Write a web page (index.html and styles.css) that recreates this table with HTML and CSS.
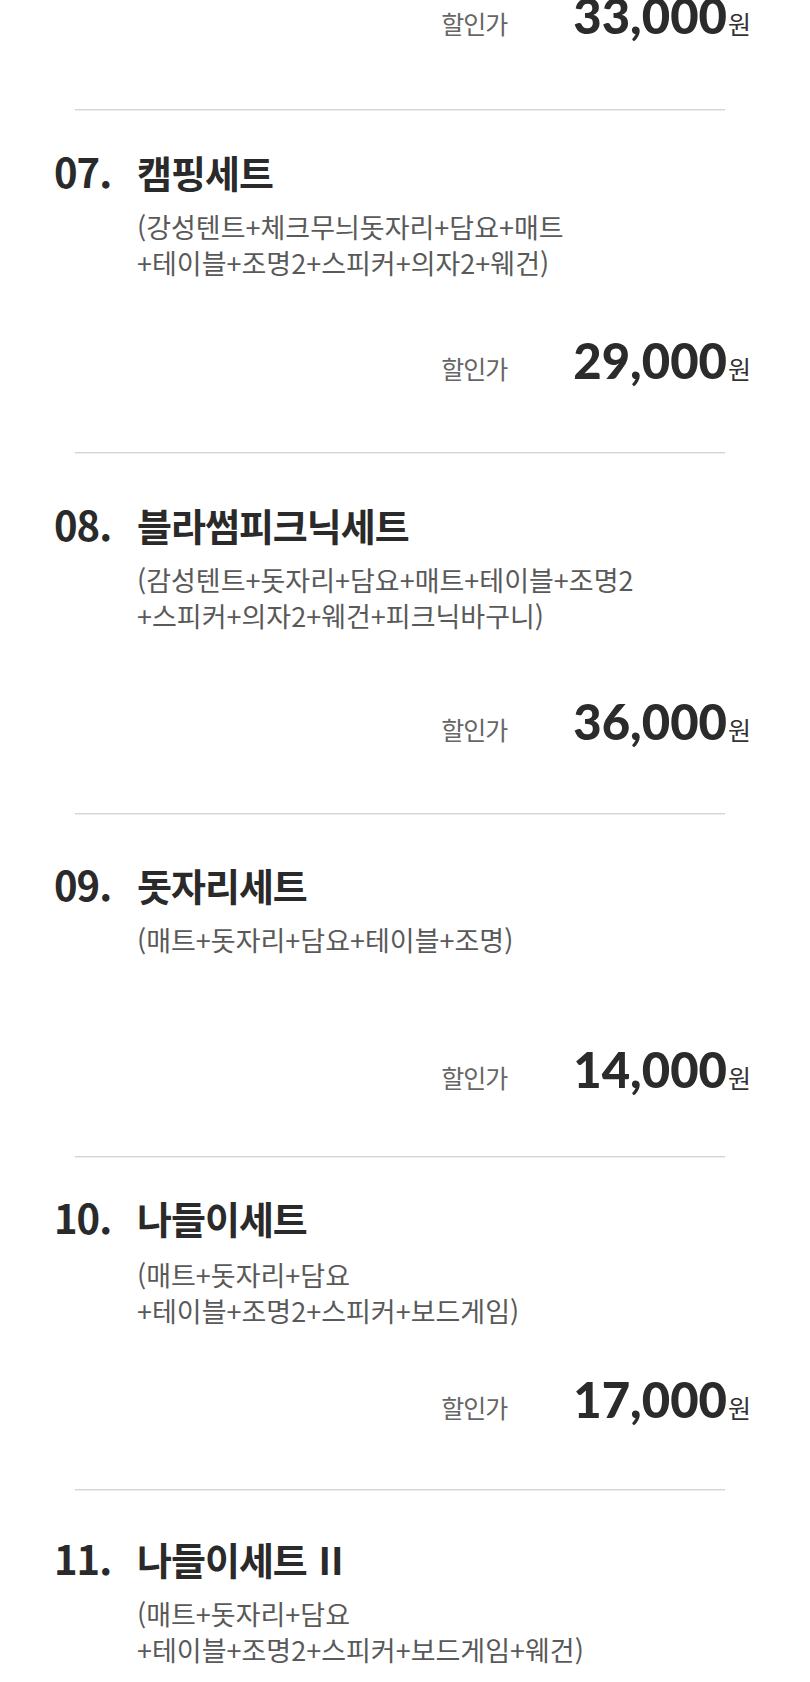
FILE: index.html
```html
<!DOCTYPE html>
<html lang="ko">
  <head>
    <meta charset="UTF-8" />
    <meta name="viewport" content="width=device-width, initial-scale=1.0" />
    <title>피크닉 세트 가격표</title>
    <link rel="stylesheet" href="styles.css">
  </head>
  <body>
    <div class="price-list">

      <!-- 06번 세트의 마지막 줄 (위에서 잘려 있음) -->
      <div class="item item--cut">
        <div class="price-row">
          <span class="price-label">할인가</span>
          <span class="price-value">33,000</span><span class="price-unit">원</span>
        </div>
      </div>

      <hr class="divider" />

      <div class="item item--07">
        <div class="item-head">
          <span class="item-no">07.</span>
          <h2 class="item-title">캠핑세트</h2>
        </div>
        <p class="item-desc">(강성텐트+체크무늬돗자리+담요+매트<br />+테이블+조명2+스피커+의자2+웨건)</p>
        <div class="price-row">
          <span class="price-label">할인가</span>
          <span class="price-value">29,000</span><span class="price-unit">원</span>
        </div>
      </div>

      <hr class="divider" />

      <div class="item item--08">
        <div class="item-head">
          <span class="item-no">08.</span>
          <h2 class="item-title">블라썸피크닉세트</h2>
        </div>
        <p class="item-desc">(감성텐트+돗자리+담요+매트+테이블+조명2<br />+스피커+의자2+웨건+피크닉바구니)</p>
        <div class="price-row">
          <span class="price-label">할인가</span>
          <span class="price-value">36,000</span><span class="price-unit">원</span>
        </div>
      </div>

      <hr class="divider" />

      <div class="item item--09">
        <div class="item-head">
          <span class="item-no">09.</span>
          <h2 class="item-title">돗자리세트</h2>
        </div>
        <p class="item-desc">(매트+돗자리+담요+테이블+조명)</p>
        <div class="price-row">
          <span class="price-label">할인가</span>
          <span class="price-value">14,000</span><span class="price-unit">원</span>
        </div>
      </div>

      <hr class="divider" />

      <div class="item item--10">
        <div class="item-head">
          <span class="item-no">10.</span>
          <h2 class="item-title">나들이세트</h2>
        </div>
        <p class="item-desc">(매트+돗자리+담요<br />+테이블+조명2+스피커+보드게임)</p>
        <div class="price-row">
          <span class="price-label">할인가</span>
          <span class="price-value">17,000</span><span class="price-unit">원</span>
        </div>
      </div>

      <hr class="divider" />

      <div class="item">
        <div class="item-head">
          <span class="item-no">11.</span>
          <h2 class="item-title">나들이세트 <span class="item-roman">II</span></h2>
        </div>
        <p class="item-desc">(매트+돗자리+담요<br />+테이블+조명2+스피커+보드게임+웨건)</p>
      </div>

    </div>
  </body>
</html>
```

FILE: styles.css
```css
body {
  margin: 0;
  padding: 0;
  background: #fff;
  font-family: "Noto Sans CJK KR", "Noto Sans", sans-serif;
  color: #222;
}

.price-list {
  width: 810px;
  overflow: hidden;
}

.divider {
  margin: 0 85px 0 75px;
  border: none;
  border-top: 1px solid #d4d4d4;
  box-shadow: 0 1px 0 #efefef;
  height: 0;
}

.item {
  padding: 44px 59px 62px 54px;
}

/* 위에서 잘린 이전 세트 */
.item--cut {
  margin-top: -13px;
  padding-top: 0;
  padding-bottom: 66px;
}

.item-head {
  display: flex;
  align-items: baseline;
  height: 48px;
  line-height: 48px;
}

.item-no {
  width: 83px;
  flex-shrink: 0;
  font-size: 40px;
  font-weight: 700;
  letter-spacing: -1px;
  color: #2a2a2a;
}

.item-title {
  margin: 0;
  font-size: 38px;
  font-weight: 700;
  letter-spacing: -1px;
  color: #2a2a2a;
}

.item-roman {
  margin-left: 2px;
  letter-spacing: 0;
}

.item-desc {
  margin: 14px 0 0 83px;
  min-height: 72px;
  font-size: 27px;
  line-height: 36px;
  letter-spacing: 0;
  color: #595959;
}

.price-row {
  display: flex;
  justify-content: flex-end;
  align-items: baseline;
  height: 56px;
  line-height: 56px;
  margin-top: 48px;
}

.item--cut .price-row {
  margin-top: 0;
}

.price-label {
  margin-right: 66px;
  font-size: 25px;
  letter-spacing: -1px;
  color: #666;
}

.price-value {
  font-family: Lato, "Liberation Sans", sans-serif;
  font-size: 49px;
  font-weight: 900;
  letter-spacing: 0;
  color: #2b2b2b;
}

.price-unit {
  margin-left: 1px;
  font-size: 25px;
  color: #333;
}

/* 원본 이미지의 세트별 간격 차이 */
.item--07 { padding-top: 37px; padding-bottom: 64px; }
.item--07 .price-row { margin-top: 51px; }
.item--08 { padding-top: 47px; padding-bottom: 64px; }
.item--08 .price-row { margin-top: 59px; }
.item--09 { padding-top: 46px; padding-bottom: 59px; }
.item--09 .price-row { margin-top: 47px; }
.item--10 { padding-top: 36px; }
.item--10 .item-desc { margin-top: 16px; }
.item--10 .price-row { margin-top: 42px; }
```
